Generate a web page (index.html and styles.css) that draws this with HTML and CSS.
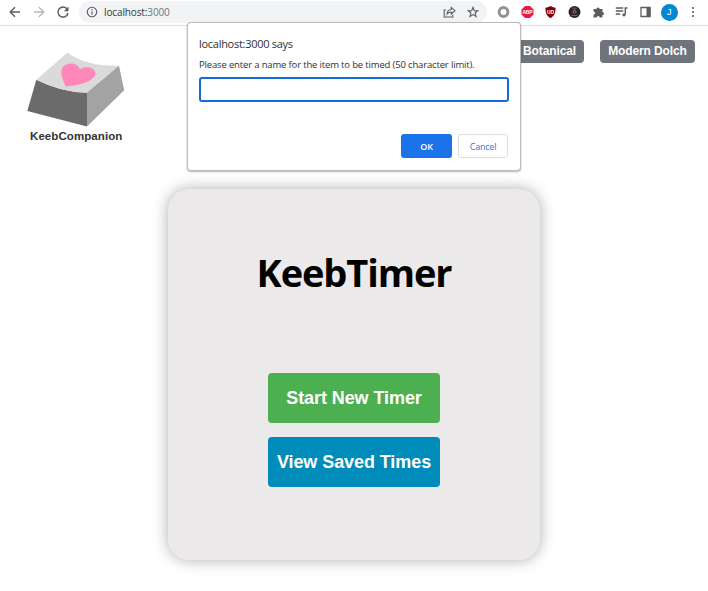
FILE: index.html
```
<!DOCTYPE html>
<html lang="en">
<head>
<meta charset="utf-8">
<title>KeebTimer</title>
<link rel="stylesheet" href="styles.css">
</head>
<body>
<header class="toolbar">
  <nav class="nav-icons">
    <svg width="12" height="12" viewBox="0 0 12 12" class="line"><path d="M11 6H1.5M6 1.2 1.2 6 6 10.8"/></svg>
    <svg width="12" height="12" viewBox="0 0 12 12" class="line faded"><path d="M1 6h9.5M6 1.2 10.8 6 6 10.8"/></svg>
    <svg width="12" height="12" viewBox="0 0 12 12" class="line"><path d="M10.2 3.2A5 5 0 1 0 11 7"/><path d="M11.5 .5v4.8H6.8z" fill="#5a5d61" stroke="none"/></svg>
  </nav>
  <div class="address">
    <svg width="12" height="12" viewBox="0 0 12 12" class="line thin"><circle cx="6" cy="6" r="4.7"/><path d="M6 5.3v3.4M6 3.1v1.2"/></svg>
    <span class="url">localhost:<span class="port">3000</span></span>
    <svg class="line thin share" width="13" height="12" viewBox="0 0 13 12"><path d="M3 4H1.2v7h8.6V8.7M4 8c.3-3 2-4.4 4.3-4.5V1.4L12 4.7 8.3 8V6C6.200 6 5 6.600 4 8z"/></svg>
    <svg class="line thin" width="12" height="12" viewBox="0 0 12 12"><path d="m6 1.300 1.300 3.300 3.500.2-2.700 2.200.9 3.500L6 8.600l-3 1.900.9-3.500L1.200 4.800l3.500-.2z"/></svg>
  </div>
  <div class="extensions">
    <svg width="13" height="14" viewBox="0 0 13 14"><circle cx="6.500" cy="7" r="4.400" fill="none" stroke="#929292" stroke-width="3"/></svg>
    <svg width="13" height="14" viewBox="0 0 13 14"><path d="M4 1h5l3.500 3.500v5L9 13H4L.5 9.500v-5z" fill="#ed1743"/><text x="6.500" y="9.300" class="badge" textLength="10">ABP</text></svg>
    <svg width="13" height="14" viewBox="0 0 13 14"><path d="M6.500 1C8.500 2.300 10 2.600 11.500 2.700c.2 5-1 8-5 10.500-4-2.500-5.200-5.500-5-10.500C3 2.600 4.500 2.300 6.500 1z" fill="#800000"/><text x="6.500" y="8.500" class="badge" textLength="7">UD</text></svg>
    <svg width="13" height="14" viewBox="0 0 13 14"><circle cx="6.500" cy="7" r="6" fill="#272728"/><path d="M4.500 3.200h4M3.500 10.500h6" stroke="#77797b" stroke-width=".8"/><path d="M4.600 8.700V6l1.900-2.200L8.400 6v2.700z" fill="#a34248"/><path d="M6 6.500h1v2H6z" fill="#272728"/></svg>
    <svg width="13" height="14" viewBox="0 0 13 14"><path d="M1.500 4h3a1.600 1.600 0 1 1 3.200 0h2.700v3a1.600 1.600 0 1 1 0 3.200v2.300H7.800a1.600 1.600 0 0 0-3.200 0H1.500V9.600a1.600 1.600 0 0 0 0-3.200z" fill="#5a5d61"/></svg>
    <svg width="13" height="14" viewBox="0 0 13 14" class="line"><path d="M.8 3h7.400M.8 6h7.400M.8 9h4.400M12.500 3h-2.200v6.500"/><circle cx="9" cy="9.800" r="1.600" fill="#5a5d61" stroke="none"/></svg>
    <svg width="13" height="14" viewBox="0 0 13 14"><path d="M2 2.500h9v9H2z" fill="none" stroke="#5a5d61" stroke-width="1.300"/><path d="M7.500 2H11.500v10h-4z" fill="#5a5d61"/></svg>
    <span class="avatar">J</span>
    <svg class="more" width="4" height="14" viewBox="0 0 4 14" fill="#5a5d61"><circle cx="2" cy="3" r="1.100"/><circle cx="2" cy="7" r="1.100"/><circle cx="2" cy="11" r="1.100"/></svg>
  </div>
</header>
<div class="page">
  <div class="page-head">
    <div class="logo">
      <svg width="100" height="76" viewBox="0 0 100 76"><path d="M40.300.7Q60 14.500 92 13.700L60 41.500 9.300 27.700z" fill="#dadada"/><path d="M9.300 27.700Q35 40.500 60 40.700V74.500L.3 59z" fill="#6b6b6b"/><path d="M9.300 27.700Q35 40.500 60 40.700L60 30z" fill="#dadada"/><path d="M60 40.700 92 13.700 97.200 38.300 60 74.500z" fill="#a3a3a3"/><path d="M38.500 34.500C37 29 34 26 34.500 19c.6-8 15-11 18.500-1.500 4-4 15-2.500 15.200 3.500C68 29 55 33 38.500 34.500z" fill="#ff87b9"/></svg>
      <div class="logo-name">KeebCompanion</div>
    </div>
    <div class="themes"><button class="theme botanical">Botanical</button><button class="theme dolch">Modern Dolch</button></div>
  </div>
  <main class="card">
    <h1>KeebTimer</h1>
    <button class="action start">Start New Timer</button>
    <button class="action saved">View Saved Times</button>
  </main>
</div>
<div class="dialog">
  <div class="origin">localhost:3000 says</div>
  <label class="message" for="item">Please enter a name for the item to be timed (50 character limit).</label>
  <input id="item" type="text">
  <div class="dialog-actions"><button class="ok">OK</button><button class="cancel">Cancel</button></div>
</div>
</body>
</html>
```

FILE: styles.css
```
* { box-sizing: border-box; }
body { margin: 0; width: 708px; height: 591px; overflow: hidden; background: #fff; font-family: "Liberation Sans", Arial, sans-serif; }
svg { display: block; flex: none; }
button { border: 0; padding: 0; margin: 0; font: inherit; white-space: nowrap; }
.line { fill: none; stroke: #5a5d61; stroke-width: 1.4; }
.thin { stroke-width: 1.1; }
.faded { stroke: #b5b7b9; }
.toolbar { height: 26px; border-bottom: 1px solid #dadcde; display: flex; align-items: center; padding-bottom: 1px; }
.nav-icons { display: flex; gap: 12px; padding-left: 9px; width: 79px; }
.address { width: 408px; height: 22px; border-radius: 11px; background: #f1f3f4; display: flex; align-items: center; padding: 0 8px 0 7px; }
.url { font: 10px/14px "Open Sans", sans-serif; color: #333639; margin-left: 6px; letter-spacing: -.12px; }
.port { color: #73777b; }
.share { margin-left: auto; margin-right: 11px; }
.extensions { display: flex; align-items: center; gap: 10.7px; padding-left: 10px; }
.badge { font: bold 5px "Liberation Sans", sans-serif; fill: #fff; text-anchor: middle; }
.avatar { width: 17px; height: 17px; border-radius: 50%; background: #0288d1; color: #fff; font-size: 9px; line-height: 17px; text-align: center; margin-left: -2px; }
.more { margin-left: 2px; }
.page { height: 565px; display: flex; flex-direction: column; }
.page-head { height: 163px; display: flex; justify-content: space-between; padding: 14px 13px 0 27px; }
.logo { padding-top: 12px; width: 100px; }
.logo-name { font-weight: bold; font-size: 11.5px; line-height: 14px; margin: 1px 0 0 3px; color: #333; letter-spacing: .08px; }
.themes { display: flex; gap: 16px; }
.theme { height: 23px; border-radius: 4px; background: #6f737b; color: #fff; font-size: 12px; font-weight: bold; line-height: 23px; letter-spacing: -.12px; }
.botanical { width: 69px; }
.dolch { width: 95px; }
.card { width: 372px; height: 371px; margin-left: 168px; border-radius: 21px; background: #ebe9ea; box-shadow: 0 0 15px rgba(0,0,0,.32); display: flex; flex-direction: column; align-items: center; padding-top: 57px; }
h1 { margin: 0; height: 127px; font: bold 38px/52px "Open Sans", sans-serif; color: #000; white-space: nowrap; letter-spacing: -1.1px; }
.action { width: 172px; height: 50px; border-radius: 4px; color: #fff; font-size: 18px; font-weight: bold; letter-spacing: -.08px; margin-bottom: 14px; flex: none; }
.start { background: #4caf50; }
.saved { background: #008cba; }
.dialog { position: absolute; left: 188px; top: 23px; width: 332px; height: 147px; border-radius: 3px; background: #fff; box-shadow: 0 0 0 1px #bbb, 0 1px 2px 1px rgba(0,0,0,.3); padding: 12px 12px 12px 11px; display: flex; flex-direction: column; font-family: "Open Sans", sans-serif; white-space: nowrap; }
.origin { font-size: 11px; line-height: 17px; color: #303134; letter-spacing: -.28px; }
.message { font-size: 9.500px; line-height: 14px; margin-top: 6px; color: #303134; letter-spacing: -.16px; }
input { width: 310px; height: 25px; border: 2px solid #1769df; border-radius: 3px; margin: 5px 0 0; outline: none; background: #fff; }
.dialog-actions { display: flex; justify-content: flex-end; gap: 6px; margin-top: 32px; }
.ok, .cancel { height: 24px; border-radius: 3px; font-size: 9px; font-weight: 600; letter-spacing: -.2px; }
.ok { width: 51px; color: #fff; background: #1a73e8; }
.cancel { width: 50px; color: #3673df; background: #fff; border: 1px solid #dadce0; font-weight: 500; }
```
